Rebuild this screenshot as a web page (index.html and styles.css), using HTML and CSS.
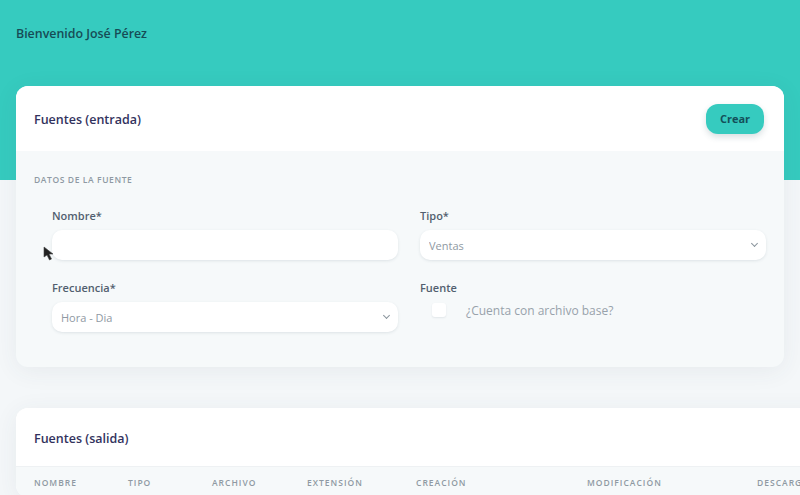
FILE: index.html
```html
<!DOCTYPE html>
<html lang="es">
<head>
    <meta charset="UTF-8">
    <meta name="viewport" content="width=device-width, initial-scale=1.0">
    <title>Fuentes</title>
    <link rel="stylesheet" href="styles.css">
</head>
<body>
    <div class="hero">
        <h2 class="welcome">Bienvenido José Pérez</h2>
    </div>

    <div class="content">
        <div class="card">
            <div class="card-header">
                <h3 class="card-title">Fuentes (entrada)</h3>
                <button class="btn-crear">Crear</button>
            </div>
            <div class="card-body">
                <h6 class="heading-small">Datos de la fuente</h6>
                <div class="form-grid">
                    <div class="form-group">
                        <label for="nombre">Nombre*</label>
                        <input type="text" id="nombre" class="form-control">
                    </div>
                    <div class="form-group">
                        <label for="tipo">Tipo*</label>
                        <div class="select-wrap">
                            <select id="tipo" class="form-control">
                                <option>Ventas</option>
                            </select>
                        </div>
                    </div>
                    <div class="form-group">
                        <label for="frecuencia">Frecuencia*</label>
                        <div class="select-wrap">
                            <select id="frecuencia" class="form-control">
                                <option>Hora - Dia</option>
                            </select>
                        </div>
                    </div>
                    <div class="form-group">
                        <label>Fuente</label>
                        <div class="check-row">
                            <span class="check-box"></span>
                            <span class="check-label">¿Cuenta con archivo base?</span>
                        </div>
                    </div>
                </div>
            </div>
        </div>

        <div class="card card-wide">
            <div class="card-header card-header-line">
                <h3 class="card-title">Fuentes (salida)</h3>
            </div>
            <table class="table">
                <colgroup>
                    <col class="c1"><col class="c2"><col class="c3"><col class="c4"><col class="c5"><col class="c6"><col>
                </colgroup>
                <thead>
                    <tr>
                        <th>Nombre</th>
                        <th>Tipo</th>
                        <th>Archivo</th>
                        <th>Extensión</th>
                        <th>Creación</th>
                        <th>Modificación</th>
                        <th>Descarga</th>
                    </tr>
                </thead>
            </table>
        </div>
    </div>

    <svg class="cursor" width="12" height="16" viewBox="0 0 12 16">
        <path d="M1 1 L1 11 L4 9 L6.5 14 L8.5 13 L6 8 L10 8 Z" fill="#222" stroke="#444" stroke-width="0.6"/>
    </svg>
</body>
</html>
```

FILE: styles.css
```css
body {
    margin: 0;
    font-family: "Open Sans", "Noto Sans", sans-serif;
    background-color: #f4f7f9;
    overflow: hidden;
    position: relative;
}
.hero {
    background-color: #36cbbf;
    height: 180px;
    padding: 24px 16px 0;
    box-sizing: border-box;
}
.welcome {
    margin: 0;
    font-size: 12.4px;
    font-weight: 600;
    color: #164b56;
    line-height: 20px;
}
.content {
    margin-top: -94px;
    padding: 0 16px;
}
.card {
    background-color: #f6f9fa;
    border-radius: 12px;
    overflow: hidden;
    box-shadow: 0 4px 24px rgba(50, 70, 90, 0.07);
    margin-bottom: 41px;
}
.card-wide {
    width: 840px;
    background-color: #fff;
}
.card-header {
    background-color: #fff;
    height: 65px;
    padding: 0 20px 0 18px;
    display: flex;
    align-items: center;
    justify-content: space-between;
}
.card-header-line {
    height: 58px;
    border-bottom: 1px solid #eef1f3;
}
.card-title {
    margin: 2px 0 0;
    font-size: 12.5px;
    font-weight: 600;
    color: #32325d;
}
.btn-crear {
    width: 58px;
    height: 30px;
    border: none;
    border-radius: 12px;
    background-color: #36cbbf;
    color: #14505a;
    font-family: inherit;
    font-size: 11px;
    font-weight: 700;
    box-shadow: 0 3px 6px rgba(40, 80, 90, 0.18);
    cursor: pointer;
}
.card-body {
    padding: 23px 18px 35px;
}
.heading-small {
    margin: 0 0 22px;
    font-size: 8.5px;
    font-weight: 600;
    letter-spacing: 0.6px;
    text-transform: uppercase;
    color: #8f99a3;
    line-height: 12px;
}
.form-grid {
    display: grid;
    grid-template-columns: 1fr 1fr;
    column-gap: 22px;
    row-gap: 20px;
    padding-left: 18px;
}
.form-group label {
    display: block;
    font-size: 11px;
    font-weight: 600;
    color: #525f6f;
    line-height: 15px;
    margin-bottom: 7px;
}
.form-control {
    display: block;
    width: 100%;
    height: 30px;
    box-sizing: border-box;
    border: none;
    border-radius: 10px;
    background-color: #fff;
    box-shadow: 0 1px 3px rgba(50, 70, 90, 0.12);
    padding: 0 9px;
    font-family: inherit;
    font-size: 11px;
    color: #8f99a3;
    outline: none;
}
.select-wrap {
    position: relative;
}
select.form-control {
    appearance: none;
    -webkit-appearance: none;
}
.select-wrap::after {
    content: "";
    position: absolute;
    right: 9px;
    top: 11px;
    width: 4px;
    height: 4px;
    border-right: 1px solid #8a949c;
    border-bottom: 1px solid #8a949c;
    transform: rotate(45deg);
}
.check-row {
    display: flex;
    align-items: center;
    height: 16px;
    padding-left: 12px;
}
.check-box {
    width: 14px;
    height: 14px;
    border-radius: 3px;
    background-color: #fff;
    box-shadow: 0 1px 2px rgba(50, 70, 90, 0.1);
}
.check-label {
    margin-left: 20px;
    font-size: 12px;
    color: #98a2ab;
}
.table {
    width: 100%;
    border-collapse: collapse;
    table-layout: fixed;
}
.table .c1 { width: 112px; }
.table .c2 { width: 84px; }
.table .c3 { width: 95px; }
.table .c4 { width: 109px; }
.table .c5 { width: 171px; }
.table .c6 { width: 170px; }
.table th {
    background-color: #f6f9fa;
    text-align: left;
    font-size: 8.5px;
    font-weight: 600;
    letter-spacing: 1px;
    text-transform: uppercase;
    color: #8f99a3;
    height: 30px;
    padding: 0;
    white-space: nowrap;
}
.table th:first-child {
    padding-left: 18px;
}
.cursor {
    position: absolute;
    left: 43px;
    top: 246px;
}
```
